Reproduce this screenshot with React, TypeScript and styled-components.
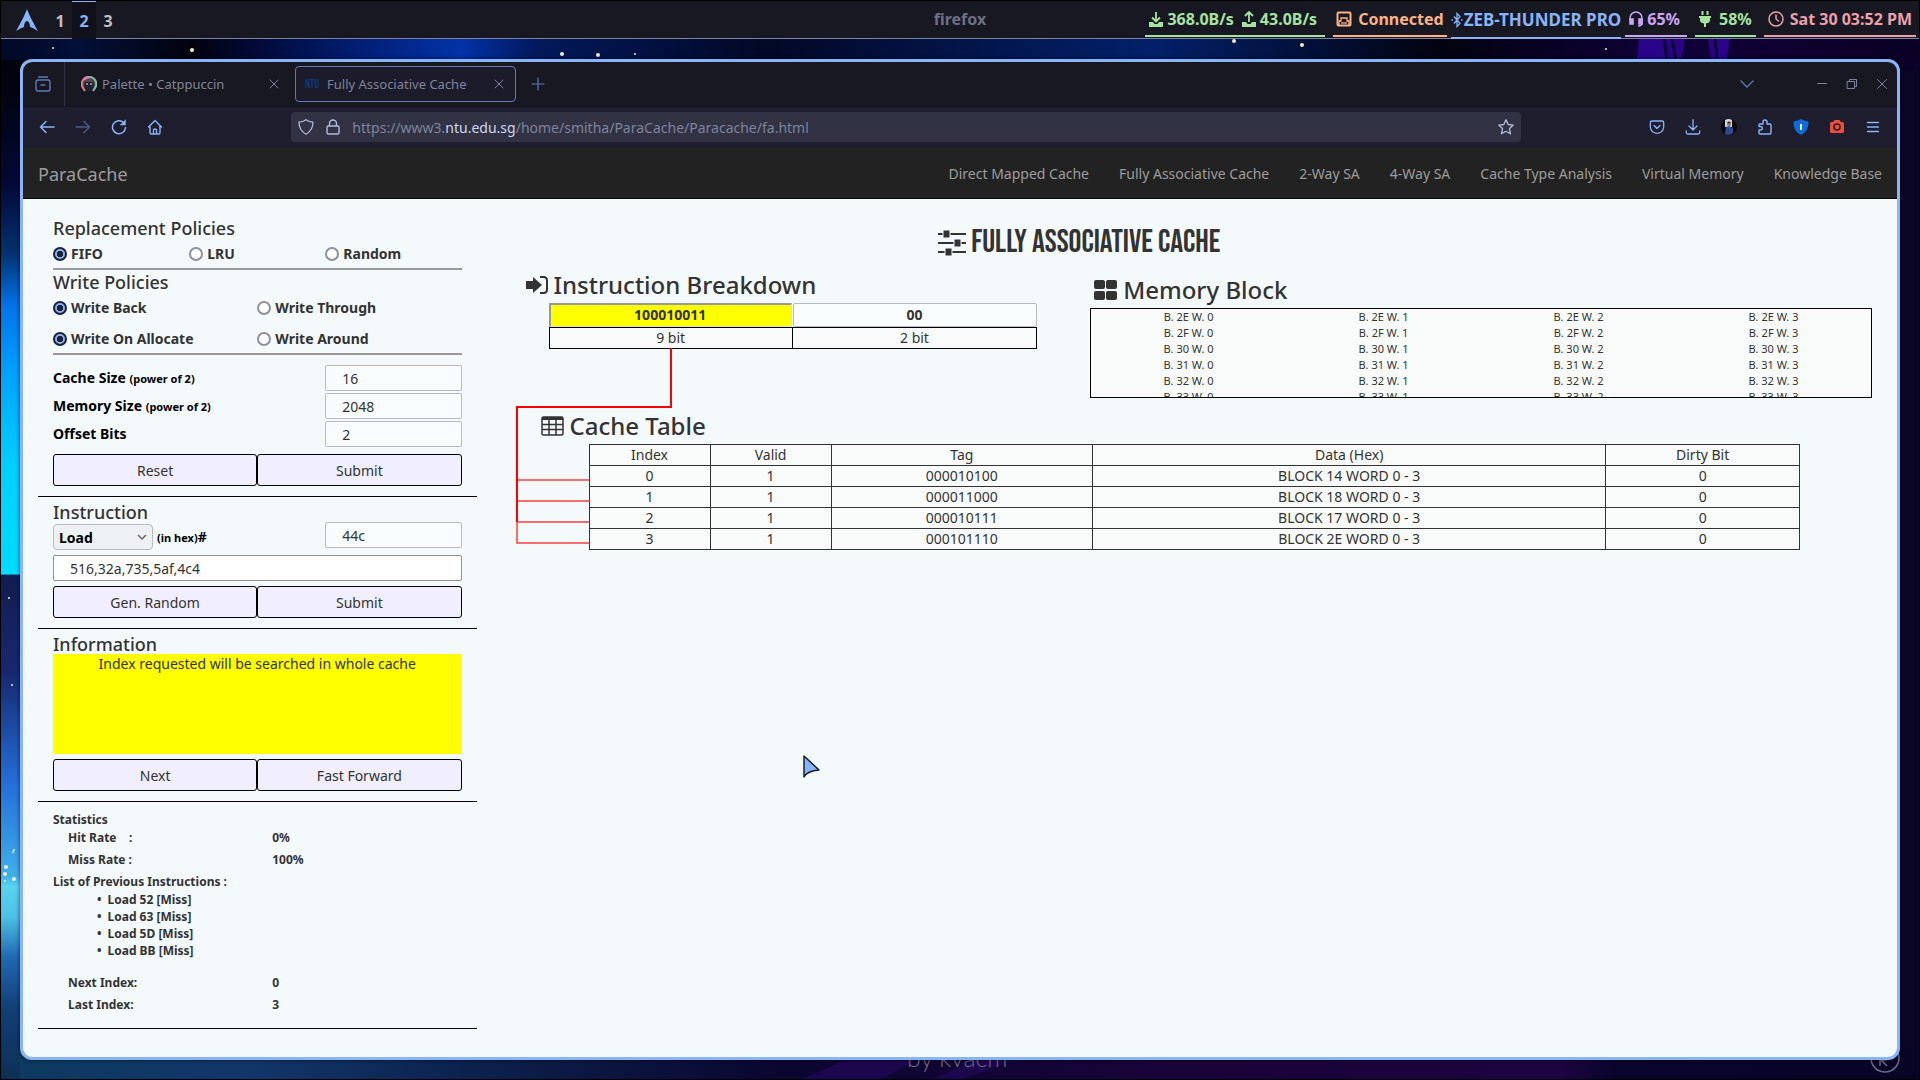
import React from "react";
import styled, { createGlobalStyle, css } from "styled-components";

const accent = "#89b4fa";
const ink = "#333";

const GlobalStyle = createGlobalStyle`
  *, *::before, *::after { box-sizing: border-box; }
  body { margin: 0; background: #000; overflow: hidden; }
  body, button, input, select { font-family: "Noto Sans", "Open Sans", sans-serif; }
  button { margin: 0; padding: 0; border: 0; background: none; color: inherit; cursor: default; }
  a { color: inherit; text-decoration: none; }
  svg { display: block; flex: none; }
`;

/* ---------- desktop ---------- */

const Desktop = styled.div`
  position: relative;
  display: flex;
  flex-direction: column;
  height: 100vh;
  padding: 1px;
  background: #000;
`;

const WallpaperSvg = styled.svg`
  position: absolute;
  inset: 0;
  width: 100%;
  height: 100%;
`;

const StatusBar = styled.header`
  position: relative;
  display: grid;
  grid-template-columns: 1fr auto 1fr;
  height: 38px;
  background: #181822;
  border-bottom: 1px solid #7f849c;
  font-size: 16px;
  font-weight: 700;
  line-height: 36px;
`;

const BarLeft = styled.div`
  display: flex;
  padding-left: 14px;
`;

const Logo = styled.span`
  display: flex;
  align-items: center;
  width: 33px;
`;

const Workspace = styled.button<{ $active?: boolean }>`
  width: 24px;
  font-size: 16px;
  font-weight: 700;
  color: ${(p) => (p.$active ? accent : "#bfbfc6")};
  background: ${(p) => (p.$active ? "#11111b" : "transparent")};
  border-top: 1px solid ${(p) => (p.$active ? accent : "transparent")};
`;

const BarTitle = styled.span`
  color: #6c7086;
`;

const BarRight = styled.div`
  display: flex;
  justify-content: flex-end;
  align-items: flex-start;
  padding-right: 3px;
`;

const Module = styled.span<{ $color: string; $pad?: number; $end?: number; $gap?: number; $before?: number; $low?: boolean }>`
  display: flex;
  align-items: center;
  gap: ${(p) => p.$gap ?? 4}px;
  height: ${(p) => (p.$low ? 38 : 36)}px;
  margin-left: ${(p) => p.$before ?? 8}px;
  padding: 2px ${(p) => p.$end ?? p.$pad ?? 4}px 0 ${(p) => p.$pad ?? 4}px;
  color: ${(p) => p.$color};
  border-bottom: 2px solid ${(p) => p.$color};
  font-size: ${(p) => (p.$low ? 17 : 16)}px;
  line-height: 32px;
  white-space: nowrap;
`;

const Rate = styled.span`
  display: flex;
  align-items: center;
  gap: 4px;
`;

/* ---------- browser window ---------- */

const Window = styled.main`
  position: relative;
  flex: 1;
  min-height: 0;
  display: flex;
  flex-direction: column;
  margin: 20px 19px 19px;
  border: 3px solid ${accent};
  border-radius: 12px;
  overflow: hidden;
  background: #f4f9fc;
  box-shadow: 0 0 4px rgba(0, 0, 0, 0.6);
`;

const TabStrip = styled.div`
  display: flex;
  flex: none;
  align-items: stretch;
  height: 45px;
  background: #181822;
  color: #7f849c;
  border-bottom: 1px solid #14141d;
`;

const ViewButton = styled.button`
  display: flex;
  align-items: center;
  justify-content: center;
  width: 42px;
  padding-right: 2px;
  color: #5f79b5;
  border-right: 1px solid #313244;
`;

const Tab = styled.div<{ $active?: boolean }>`
  display: flex;
  align-items: center;
  width: 221px;
  margin: 4px 0 4px ${(p) => (p.$active ? 0 : 9)}px;
  padding: 0 ${(p) => (p.$active ? 8 : 12)}px 0 ${(p) => (p.$active ? 9 : 6)}px;
  border: 1px solid ${(p) => (p.$active ? "#5f79b5" : "transparent")};
  border-radius: 4px;
  background: ${(p) => (p.$active ? "#1c1b29" : "transparent")};
`;

const TabName = styled.span`
  flex: 1;
  padding-left: 5px;
  font-size: 13px;
  white-space: nowrap;
`;

const NtuMark = styled.span`
  width: 17px;
  font-family: "Bebas Neue", "Liberation Sans", sans-serif;
  font-size: 12px;
  color: #0d3a80;
`;

const SmallIconButton = styled.button`
  display: flex;
  align-items: center;
  justify-content: center;
  width: 16px;
`;

const NewTab = styled.button`
  display: flex;
  align-items: center;
  padding: 0 14px;
  color: #5f79b5;
`;

const WindowControls = styled.div`
  display: flex;
  flex: 1;
  justify-content: flex-end;
`;

const ControlButton = styled.button<{ $after?: number; $tint?: string }>`
  display: flex;
  align-items: center;
  justify-content: center;
  width: 30px;
  margin-right: ${(p) => p.$after ?? 0}px;
  color: ${(p) => p.$tint ?? "#7f849c"};
`;

const Toolbar = styled.div`
  display: grid;
  grid-template-columns: 5fr minmax(300px, 1230px) 7fr;
  flex: none;
  align-items: center;
  height: 40px;
  background: #1e1e2e;
  color: ${accent};
`;

const ToolGroup = styled.div<{ $end?: boolean }>`
  display: flex;
  justify-content: ${(p) => (p.$end ? "flex-end" : "flex-start")};
  padding: 0 6px;
`;

const ToolButton = styled.button<{ $dim?: boolean }>`
  display: flex;
  align-items: center;
  justify-content: center;
  width: 36px;
  height: 32px;
  opacity: ${(p) => (p.$dim ? 0.4 : 1)};
`;

const UrlBar = styled.div`
  display: flex;
  align-items: center;
  gap: 11px;
  height: 30px;
  padding: 0 7px;
  border-radius: 4px;
  background: #313244;
  color: #b4bcdc;
`;

const Url = styled.span`
  flex: 1;
  font-size: 14px;
  color: #7f849c;

  b { font-weight: 400; color: #cdd6f4; }
`;

/* ---------- page ---------- */

const NavBar = styled.nav`
  display: flex;
  flex: none;
  align-items: center;
  justify-content: space-between;
  height: 52px;
  padding: 2px 15px 0;
  background: #222;
  border-bottom: 1px solid #080808;
  color: #9d9d9d;
`;

const Brand = styled.a`
  font-size: 18px;
`;

const NavLinks = styled.div`
  display: flex;
  gap: 30px;
  font-size: 14px;
`;

const Page = styled.div`
  display: grid;
  grid-template-columns: 1fr 3fr;
  flex: 1;
  min-height: 0;
  color: ${ink};
  font-size: 14px;
  line-height: 20px;
`;

const SidePanel = styled.aside`
  padding: 14px 15px 0;
`;

const Block = styled.section`
  padding: 5px 15px 10px;
  border-bottom: 1px solid #000;
`;

const SmallHeading = styled.h4`
  margin: 0;
  font-size: 18px;
  font-weight: 500;
  line-height: 20px;
`;

const RadioRow = styled.div<{ $cols: number }>`
  display: grid;
  grid-template-columns: repeat(${(p) => p.$cols}, 1fr);
  row-gap: 11px;
  margin-bottom: 2px;
  padding: 6px 0 4px;
  border-bottom: 2px solid #999;
`;

const RadioLabel = styled.label`
  display: flex;
  align-items: center;
  gap: 4px;
  font-weight: 700;
`;

const Radio = styled.input.attrs({ type: "radio" })`
  appearance: none;
  width: 14px;
  height: 14px;
  margin: 0;
  border: 2px solid #8f8f9d;
  border-radius: 50%;
  background: #fff;

  &:checked {
    border-color: #1e2236;
    background: radial-gradient(circle, #1e2236 3px, ${accent} 3px);
  }
`;

const field = css`
  min-width: 0;
  width: 100%;
  height: 26px;
  margin: 0;
  padding: 0 16px;
  border-radius: 2px;
  color: ${ink};
  font-size: 14px;
  outline: none;
`;

const TextBox = styled.input`
  ${field}
  border: 1px solid #babac6;
  background: #fafdfd;
`;

const WideBox = styled.input`
  ${field}
  display: block;
  margin-top: 5px;
  border: 1px solid #8f8f9d;
  background: #fff;
`;

const FormGrid = styled.div`
  display: grid;
  grid-template-columns: 2fr 1fr;
  row-gap: 2px;
  align-items: center;
  margin-top: 10px;
`;

const FieldLabel = styled.label`
  color: #000;
  font-weight: 700;

  small { font-size: 11px; }
`;

const InstructionRow = styled.div`
  display: grid;
  grid-template-columns: 2fr 1fr;
  align-items: start;
`;

const OpGroup = styled.div`
  display: flex;
  align-items: center;
  gap: 4px;
  padding-top: 2px;
`;

const SelectWrap = styled.div`
  position: relative;
  color: #666;

  svg { position: absolute; right: 6px; top: 9px; pointer-events: none; }
`;

const Select = styled.select`
  appearance: none;
  display: block;
  width: 100px;
  height: 26px;
  padding: 0 5px;
  border: 1px solid #babac6;
  border-radius: 4px;
  background: #eef1f3;
  color: #000;
  font-size: 14px;
  font-weight: 700;
`;

const ButtonPair = styled.div<{ $top: number }>`
  display: grid;
  grid-template-columns: 1fr 1fr;
  margin-top: ${(p) => p.$top}px;
`;

const PageButton = styled.button`
  height: 32px;
  border: 1px solid #000;
  border-radius: 3px;
  background: #f0eeff;
  color: ${ink};
  font-size: 14px;
`;

const InfoBox = styled.p`
  height: 100px;
  margin: 0;
  background: #ff0;
  text-align: center;
`;

const Stats = styled.section`
  padding: 9px 15px 10px;
  border-bottom: 1px solid #000;
  font-size: 12px;
  font-weight: 700;
  line-height: 18px;
`;

const StatRow = styled.div`
  display: grid;
  grid-template-columns: 1fr 1fr;
  margin: 0 0 4px 15px;
  width: 100%;
  white-space: pre;
`;

const History = styled.ul`
  margin: 0 0 15px;
  padding-left: 44px;
  line-height: 17px;
  list-style: none;

  li::before { content: "•"; margin-right: 6px; }
`;

const Main = styled.div`
  position: relative;
`;

const Title = styled.h2`
  display: flex;
  align-items: center;
  justify-content: center;
  gap: 5px;
  height: 36px;
  margin: 26px 230px 7px 0;
  font-family: "Bebas Neue", "Roboto Condensed", "Liberation Sans Narrow", "Noto Sans", sans-serif;
  font-size: 32px;
  font-weight: 500;
  text-transform: uppercase;
  white-space: nowrap;
`;

const TopGrid = styled.div`
  display: grid;
  grid-template-columns: 5fr 7fr;
  height: 141px;
`;

const SectionHeading = styled.h3<{ $indent: number }>`
  display: flex;
  align-items: center;
  gap: 6px;
  margin: 0;
  padding-left: ${(p) => p.$indent}px;
  font-size: 24px;
  font-weight: 500;
  line-height: 34px;
`;

const BreakdownGrid = styled.div`
  margin: 1px 40px 0 57px;
  display: grid;
  grid-template-columns: 1fr 1fr;
`;

const BitsInput = styled.input<{ $hot?: boolean }>`
  min-width: 0;
  height: 24px;
  margin: 0 ${(p) => (p.$hot ? 1 : 0)}px 0 0;
  padding: 0 1px 2px 0;
  border: 1px solid #babac6;
  border-radius: 2px;
  background: #fafdfd;
  color: ${ink};
  font-size: 14px;
  font-weight: 700;
  text-align: center;

  ${(p) =>
    p.$hot &&
    css`
      border: solid #999;
      border-width: 2px 1px 1px 2px;
      border-right-color: #ddd;
      border-bottom-color: #ddd;
      border-radius: 0;
      background: #ff0;
    `}
`;

const BitsLabel = styled.div`
  height: 22px;
  border: 1px solid #000;
  background: #f9fbfa;
  text-align: center;

  & + & { border-left: 0; }
`;

const MemorySection = styled.section`
  padding-top: 5px;
`;

const MemoryBox = styled.div`
  height: 90px;
  margin: 1px 25px 0 13px;
  border: 1px solid #000;
  background: #f9fbfa;
  overflow: hidden;
`;

const MemoryTable = styled.table`
  width: 100%;
  table-layout: fixed;
  border-collapse: collapse;
  font-size: 11px;
  line-height: 16px;
  text-align: center;

  td { padding: 0; }
`;

const CacheTable = styled.table`
  width: calc(100% - 194px);
  margin: 1px 0 0 97px;
  table-layout: fixed;
  border-collapse: collapse;
  background: #f9fbfa;
  text-align: center;

  th, td { height: 21px; padding: 0; border: 1px solid #333; font-weight: 400; }
`;

const Wires = styled.svg`
  position: absolute;
  left: 24px;
  top: 139px;
`;

const Pointer = styled.svg`
  position: absolute;
  left: 802px;
  top: 754px;
`;

/* ---------- icons ---------- */

type IconProps = { size?: number; w?: number; children: React.ReactNode };
const Line = ({ size = 16, w = 1.3, children }: IconProps) => (
  <svg width={size} height={size} viewBox="0 0 16 16" fill="none" stroke="currentColor" strokeWidth={w} strokeLinecap="round" strokeLinejoin="round">
    {children}
  </svg>
);

const CloseIcon = () => (
  <Line w={1}><path d="M4 4l8 8M12 4l-8 8" /></Line>
);

const Wallpaper = () => (
  <WallpaperSvg viewBox="0 0 1920 1080" preserveAspectRatio="none" aria-hidden="true">
    <defs>
      <linearGradient id="left" x1="0" y1="0" x2="0" y2="1">
        <stop offset="0.03" stopColor="#02030f" />
        <stop offset="0.12" stopColor="#030835" />
        <stop offset="0.19" stopColor="#04326f" />
        <stop offset="0.24" stopColor="#0272e8" />
        <stop offset="0.31" stopColor="#00a4ff" />
        <stop offset="0.4" stopColor="#00d0ff" />
        <stop offset="0.504" stopColor="#00dcff" />
        <stop offset="0.505" stopColor="#131c4f" />
        <stop offset="0.6" stopColor="#17286e" />
        <stop offset="0.71" stopColor="#246fd8" />
        <stop offset="0.8" stopColor="#3fb0ea" />
        <stop offset="0.81" stopColor="#58d4ee" />
        <stop offset="0.84" stopColor="#4cc0e6" />
        <stop offset="0.88" stopColor="#2068b0" />
        <stop offset="0.93" stopColor="#123f75" />
        <stop offset="1" stopColor="#0b3054" />
      </linearGradient>
      <linearGradient id="top" x1="0" y1="0" x2="1" y2="0">
        <stop offset="0" stopColor="#020824" />
        <stop offset="0.04" stopColor="#03103a" />
        <stop offset="0.1" stopColor="#02020e" />
        <stop offset="0.14" stopColor="#020c40" />
        <stop offset="0.19" stopColor="#021f78" />
        <stop offset="0.24" stopColor="#0233a8" />
        <stop offset="0.28" stopColor="#02185a" />
        <stop offset="0.4" stopColor="#020826" />
        <stop offset="0.6" stopColor="#02206a" />
        <stop offset="0.69" stopColor="#020e34" />
        <stop offset="0.75" stopColor="#02030f" />
        <stop offset="0.87" stopColor="#10003a" />
        <stop offset="1" stopColor="#0b0024" />
      </linearGradient>
      <linearGradient id="bottom" x1="0" y1="0" x2="1" y2="0">
        <stop offset="0" stopColor="#0c3a60" />
        <stop offset="0.12" stopColor="#12366a" />
        <stop offset="0.25" stopColor="#0b1f4a" />
        <stop offset="0.4" stopColor="#0a0630" />
        <stop offset="0.6" stopColor="#180338" />
        <stop offset="0.81" stopColor="#1c0440" />
        <stop offset="0.84" stopColor="#09042c" />
        <stop offset="1" stopColor="#070426" />
      </linearGradient>
    </defs>
    <rect width="1920" height="1080" fill="#0a0524" />
    <rect width="1920" height="70" fill="url(#top)" />
    <rect y="60" width="40" height="1020" fill="url(#left)" />
    <rect x="20" y="1050" width="1900" height="30" fill="url(#bottom)" />
    <path d="M1639 38h46l-4 22h-44zM1708 38h22l-3 22h-16z" fill="#2a0488" />
    <path d="M1664 38l3 22M1672 38l4 22M1715 38l2 22" stroke="#0b0130" strokeWidth="3" />
    <path d="M800 1080l50-22h70l-40 22zM930 1080l50-22h40l-60 22z" fill="#1c064e" />
    <g fill="#f3ecc8">
      <circle cx="192" cy="50" r="2" /><circle cx="53" cy="48" r="1" /><circle cx="562" cy="54" r="2" />
      <circle cx="598" cy="55" r="2" /><circle cx="635" cy="54" r="1" /><circle cx="1234" cy="41" r="2" />
      <circle cx="1302" cy="45" r="2" /><circle cx="1606" cy="49" r="1" /><circle cx="9" cy="598" r="1" />
      <circle cx="12" cy="685" r="1" /><circle cx="14" cy="850" r="1" /><circle cx="13" cy="852" r="1" />
      <circle cx="6" cy="867" r="2" /><circle cx="5" cy="874" r="2" /><circle cx="14" cy="879" r="2" /><circle cx="5" cy="881" r="1" />
    </g>
    <text x="907" y="1067" fill="#6f6a86" fontFamily="Lato, sans-serif" fontSize="25" fontWeight="300">by kvacm</text>
    <circle cx="1885" cy="1058" r="14" fill="none" stroke="#6f6a86" strokeWidth="1.5" />
    <path d="M1880 1066v-12h6q4 3 0 6h-5l6 6" fill="none" stroke="#6f6a86" strokeWidth="1.5" />
    <path d="M0 0H1920V1080H0z" fill="none" stroke="#000" strokeWidth="2" />
  </WallpaperSvg>
);

const TransferIcon = ({ up }: { up?: boolean }) => (
  <svg width="14" height="16" viewBox="0 0 14 16" fill="none" stroke="currentColor" strokeWidth="1.8">
    <path d={up ? "M7 11V1.5M3 5l4-4 4 4" : "M7 1v9M3 6.500l4 4 4-4"} />
    <path d="M0 11h4l1.500 2h3L10 11h4v5H0z" fill="currentColor" stroke="none" />
  </svg>
);

/* ---------- data ---------- */

const navLinks = ["Direct Mapped Cache", "Fully Associative Cache", "2-Way SA", "4-Way SA", "Cache Type Analysis", "Virtual Memory", "Knowledge Base"];
const memoryBlocks = ["2E", "2F", "30", "31", "32", "33"];
const words = [0, 1, 2, 3];
const cacheRows = [
  ["000010100", "14"],
  ["000011000", "18"],
  ["000010111", "17"],
  ["000101110", "2E"],
];
const history = ["Load 52 [Miss]", "Load 63 [Miss]", "Load 5D [Miss]", "Load BB [Miss]"];

const Option = ({ group, label, on }: { group: string; label: string; on?: boolean }) => (
  <RadioLabel>
    <Radio name={group} defaultChecked={on} />
    {label}
  </RadioLabel>
);

const Stat = ({ label, value }: { label: string; value: string }) => (
  <StatRow>
    <span>{label}</span>
    <span>{value}</span>
  </StatRow>
);

/* ---------- parts ---------- */

const TopBar = () => (
  <StatusBar>
    <BarLeft>
      <Logo>
        <svg width="24" height="24" viewBox="0 0 24 24" fill={accent}>
          <path d="M12 1C11 4 6 15 1 23c4-2.500 6-3.500 8-4 0-4 1.500-6 3-6s3 2 3 6c2 .5 4 1.500 8 4C18 15 13 4 12 1z" />
        </svg>
      </Logo>
      <Workspace>1</Workspace>
      <Workspace $active>2</Workspace>
      <Workspace>3</Workspace>
    </BarLeft>
    <BarTitle>firefox</BarTitle>
    <BarRight>
      <Module $color="#a6e3a1" $gap={8} $end={8}>
        <Rate><TransferIcon />368.0B/s</Rate>
        <Rate><TransferIcon up />43.0B/s</Rate>
      </Module>
      <Module $color="#fab387" $gap={6} $pad={3}>
        <svg width="16" height="16" viewBox="0 0 16 16" fill="none" stroke="currentColor" strokeWidth="2">
          <rect x="1.500" y="1.500" width="13" height="13" rx="1" />
          <path d="M3 14v-4h2V7h6v3h2v4M6 13v-2M8 13v-2M10 13v-2" strokeWidth="1.300" />
        </svg>
        Connected
      </Module>
      <Module $color={accent} $before={4} $gap={1} $pad={0} $low>
        <svg width="12" height="16" viewBox="0 0 12 16" fill="none" stroke="currentColor" strokeWidth="1.300">
          <path d="M3 4.500l6 7-3 3v-13l3 3-6 7M.5 8h1.500M10 8h1.500" />
        </svg>
        ZEB-THUNDER PRO
      </Module>
      <Module $color="#cba6f7" $before={4} $end={7}>
        <svg width="14" height="16" viewBox="0 0 14 16" fill="none" stroke="currentColor" strokeWidth="1.600">
          <path d="M1 9V7a6 6 0 0112 0v5q0 3-4 3" />
          <path d="M1 8h3v5H1zM10 8h3v5h-3z" fill="currentColor" />
        </svg>
        65%
      </Module>
      <Module $color="#a6e3a1" $gap={8}>
        <svg width="12" height="16" viewBox="0 0 12 16" fill="currentColor">
          <path d="M2.500 0h2v4h-2zM7.500 0h2v4h-2zM0 5h12v2h-1v2q0 3-4 3.500V16H5v-3.500Q1 12 1 9V7H0z" />
        </svg>
        58%
      </Module>
      <Module $color="#eba0ac" $gap={6}>
        <Line w={1.5}><circle cx="8" cy="8" r="7" /><path d="M8 4v4l2.500 2" /></Line>
        Sat 30 03:52 PM
      </Module>
    </BarRight>
  </StatusBar>
);

const BrowserChrome = () => (
  <>
    <TabStrip>
      <ViewButton aria-label="Firefox View">
        <Line w={1.4}><path d="M3.500 1h9M1 6.500Q1 4 3 4h10q2 0 2 2.500V13q0 2-2 2H3q-2 0-2-2zM6 9h4" /></Line>
      </ViewButton>
      <Tab>
        <svg width="16" height="16" viewBox="0 0 16 16">
          <circle cx="8" cy="8" r="7" fill="#5b4751" />
          <path d="M8 1A7 7 0 002 12l2 3" fill="none" stroke="#d77f80" strokeWidth="2" />
          <path d="M3 4q2-3 6-3" fill="none" stroke="#ce8bb8" strokeWidth="2" />
          <path d="M9 1a7 7 0 015 11l-2 3" fill="none" stroke="#7fc2a4" strokeWidth="2" />
          <path d="M4 5l2 1h4l2-1 1 5-2 5H5l-2-5z" fill="#232231" />
          <circle cx="6" cy="8" r="1" fill="#b7a9c9" /><circle cx="10" cy="8" r="1" fill="#b7a9c9" />
        </svg>
        <TabName>Palette • Catppuccin</TabName>
        <SmallIconButton aria-label="Close tab"><CloseIcon /></SmallIconButton>
      </Tab>
      <Tab $active>
        <NtuMark>NTU</NtuMark>
        <TabName>Fully Associative Cache</TabName>
        <SmallIconButton aria-label="Close tab"><CloseIcon /></SmallIconButton>
      </Tab>
      <NewTab aria-label="New tab"><Line w={1.2}><path d="M8 2v12M2 8h12" /></Line></NewTab>
      <WindowControls>
        <ControlButton aria-label="List tabs" $after={45} $tint="#5f79b5"><Line><path d="M2 5l6 6 6-6" /></Line></ControlButton>
        <ControlButton aria-label="Minimize"><Line w={1}><path d="M3.500 7.500h9" /></Line></ControlButton>
        <ControlButton aria-label="Restore"><Line w={1}><path d="M3.500 5.500h7v7h-7zM5.500 5.500v-2h7v7h-2" /></Line></ControlButton>
        <ControlButton aria-label="Close"><Line w={1}><path d="M3.500 3.500l9 9M12.500 3.500l-9 9" /></Line></ControlButton>
      </WindowControls>
    </TabStrip>
    <Toolbar>
      <ToolGroup>
        <ToolButton aria-label="Back"><Line w={1.5}><path d="M15 8H1.500M7 2.500L1.500 8 7 13.500" /></Line></ToolButton>
        <ToolButton aria-label="Forward" $dim><Line w={1.5}><path d="M1 8h13.500M9 2.500L14.500 8 9 13.500" /></Line></ToolButton>
        <ToolButton aria-label="Reload">
          <Line w={1.5}><path d="M14.500 8.500A6.500 6.500 0 1112.500 3.500" /><path d="M14.500 1v5h-5z" fill="currentColor" strokeWidth="0.500" /></Line>
        </ToolButton>
        <ToolButton aria-label="Home">
          <Line w={1.4}><path d="M1.500 8L8 1.500 14.500 8M3 7v6.500q0 1.500 1.500 1.500h7q1.500 0 1.500-1.500V7M6.500 15v-4q0-1 1.500-1t1.500 1v4" /></Line>
        </ToolButton>
      </ToolGroup>
      <UrlBar>
        <Line><path d="M8 .7Q11 3 15 3.200 15 11 8 15.300 1 11 1 3.200 5 3 8 .7z" /></Line>
        <Line w={1.4}><path d="M4.500 7V4.500a3.500 3.500 0 017 0V7M3.500 7h9q1.500 0 1.500 1.500v5q0 1.500-1.500 1.500h-9Q2 15 2 13.500v-5Q2 7 3.500 7z" /></Line>
        <Url>https://www3.<b>ntu.edu.sg</b>/home/smitha/ParaCache/Paracache/fa.html</Url>
        <Line><path d="M8 .8l2.200 4.700 5.100.6-3.800 3.500 1 5.200L8 12.300l-4.500 2.500 1-5.200L.7 6.100l5.100-.6z" /></Line>
      </UrlBar>
      <ToolGroup $end>
        <ToolButton aria-label="Pocket">
          <Line><path d="M3 2h10q1.700 0 1.700 1.700V8Q14 14 8 14.300 2 14 1.300 8V3.700Q1.300 2 3 2zM5 6.500l3 3 3-3" /></Line>
        </ToolButton>
        <ToolButton aria-label="Downloads"><Line><path d="M8 .7v10M4 7l4 4 4-4M1.300 12v1.500q0 1.500 1.500 1.500h10.400q1.500 0 1.500-1.500V12" /></Line></ToolButton>
        <ToolButton aria-label="Account">
          <svg width="16" height="16" viewBox="0 0 16 16">
            <circle cx="8" cy="8" r="8" fill="#08080c" />
            <path d="M4 1q4-2 7 0v7H4z" fill="#c8d6dc" />
            <path d="M4 15l1-7 3-1 4 2v5q-3 3-8 1z" fill="#24509c" />
            <circle cx="8" cy="5" r="2" fill="#9c6c55" />
            <path d="M6 4Q8 1 10 4z" fill="#161418" />
            <path d="M8 9v6" stroke="#7a294e" />
          </svg>
        </ToolButton>
        <ToolButton aria-label="Extensions">
          <Line w={1.4}><path d="M2.500 5h3.500V3q0-2 2-2t2 2v2h3q1 0 1 1v8q0 1-1 1H3q-1 0-1-1v-3h1.500q2-.2 2-1.800T3.500 7.500H2V5.500z" /></Line>
        </ToolButton>
        <ToolButton aria-label="Password manager">
          <svg width="16" height="16" viewBox="0 0 16 16">
            <path d="M8 0q4 2.300 7.500 2.500Q16 12 8 16 0 12 .5 2.500 4 2.300 8 0z" fill="#0d6bdc" />
            <path d="M7 5h2v6H7z" fill="#e8f1ff" />
          </svg>
        </ToolButton>
        <ToolButton aria-label="Screenshot">
          <svg width="16" height="16" viewBox="0 0 16 16">
            <path d="M2.500 3H4l1.500-2h5L12 3h1.500Q15 3 15 4.500v8q0 1.500-1.500 1.500h-11Q1 14 1 12.500v-8Q1 3 2.500 3z" fill="#ea4f3d" />
            <circle cx="8" cy="8" r="3" fill="none" stroke="#2a1a26" strokeWidth="1.500" />
          </svg>
        </ToolButton>
        <ToolButton aria-label="Menu"><Line w={1.4}><path d="M2.500 3.500h11M2.500 8h11M2.500 12.500h11" /></Line></ToolButton>
      </ToolGroup>
    </Toolbar>
  </>
);

const Controls = () => (
  <SidePanel>
    <Block>
      <SmallHeading>Replacement Policies</SmallHeading>
      <RadioRow $cols={3}>
        <Option group="replace" label="FIFO" on />
        <Option group="replace" label="LRU" />
        <Option group="replace" label="Random" />
      </RadioRow>
      <SmallHeading>Write Policies</SmallHeading>
      <RadioRow $cols={2}>
        <Option group="hit" label="Write Back" on />
        <Option group="hit" label="Write Through" />
        <Option group="miss" label="Write On Allocate" on />
        <Option group="miss" label="Write Around" />
      </RadioRow>
      <FormGrid>
        <FieldLabel htmlFor="cache">Cache Size <small>(power of 2)</small></FieldLabel>
        <TextBox id="cache" defaultValue="16" />
        <FieldLabel htmlFor="memory">Memory Size <small>(power of 2)</small></FieldLabel>
        <TextBox id="memory" defaultValue="2048" />
        <FieldLabel htmlFor="offset">Offset Bits</FieldLabel>
        <TextBox id="offset" defaultValue="2" />
      </FormGrid>
      <ButtonPair $top={7}>
        <PageButton>Reset</PageButton>
        <PageButton>Submit</PageButton>
      </ButtonPair>
    </Block>
    <Block>
      <SmallHeading>Instruction</SmallHeading>
      <InstructionRow>
        <OpGroup>
          <SelectWrap>
            <Select aria-label="Operation" defaultValue="Load">
              <option>Load</option>
              <option>Store</option>
            </Select>
            <svg width="10" height="8" viewBox="0 0 10 8" fill="none" stroke="currentColor" strokeWidth="1.500"><path d="M1 2l4 4 4-4" /></svg>
          </SelectWrap>
          <FieldLabel htmlFor="address"><small>(in hex)</small>#</FieldLabel>
        </OpGroup>
        <TextBox id="address" defaultValue="44c" />
      </InstructionRow>
      <WideBox aria-label="Instruction list" defaultValue="516,32a,735,5af,4c4" />
      <ButtonPair $top={5}>
        <PageButton>Gen. Random</PageButton>
        <PageButton>Submit</PageButton>
      </ButtonPair>
    </Block>
    <Block>
      <SmallHeading>Information</SmallHeading>
      <InfoBox>Index requested will be searched in whole cache</InfoBox>
      <ButtonPair $top={5}>
        <PageButton>Next</PageButton>
        <PageButton>Fast Forward</PageButton>
      </ButtonPair>
    </Block>
    <Stats>
      <div>Statistics</div>
      <Stat label={"Hit Rate    :"} value="0%" />
      <Stat label="Miss Rate :" value="100%" />
      <div>List of Previous Instructions :</div>
      <History>{history.map((h) => <li key={h}>{h}</li>)}</History>
      <Stat label="Next Index:" value="0" />
      <Stat label="Last Index:" value="3" />
    </Stats>
  </SidePanel>
);

const Simulator = () => (
  <Main>
    <Title>
      <svg width="28" height="26" viewBox="0 0 28 26" fill={ink}>
        <path d="M0 3h28v2H0zM0 12h28v2H0zM0 21h28v2H0z" />
        <path d="M5 0h7v8H5zM16 9h7v8h-7zM7 18h7v8H7z" stroke="#f4f9fc" />
      </svg>
      Fully Associative Cache
    </Title>
    <TopGrid>
      <section>
        <SectionHeading $indent={34}>
          <svg width="22" height="18" viewBox="0 0 22 18" fill={ink}>
            <path d="M0 5h7V1l9 8-9 8v-4H0z" />
            <path d="M14 1h3.500Q21 1 21 4.500v9q0 3.500-3.500 3.500H14" fill="none" stroke={ink} strokeWidth="2" />
          </svg>
          Instruction Breakdown
        </SectionHeading>
        <BreakdownGrid>
          <BitsInput aria-label="Tag" $hot readOnly value="100010011" />
          <BitsInput aria-label="Offset" readOnly value="00" />
          <BitsLabel>9 bit</BitsLabel>
          <BitsLabel>2 bit</BitsLabel>
        </BreakdownGrid>
      </section>
      <MemorySection>
        <SectionHeading $indent={17}>
          <svg width="23" height="20" viewBox="0 0 23 20" fill={ink}>
            <rect width="11" height="9" rx="2" /><rect x="12" width="11" height="9" rx="2" />
            <rect y="11" width="11" height="9" rx="2" /><rect x="12" y="11" width="11" height="9" rx="2" />
          </svg>
          Memory Block
        </SectionHeading>
        <MemoryBox>
          <MemoryTable>
            <tbody>
              {memoryBlocks.map((b) => (
                <tr key={b}>{words.map((w) => <td key={w}>B. {b} W. {w}</td>)}</tr>
              ))}
            </tbody>
          </MemoryTable>
        </MemoryBox>
      </MemorySection>
    </TopGrid>
    <SectionHeading $indent={49}>
      <svg width="23" height="20" viewBox="0 0 23 20" fill="none" stroke={ink} strokeWidth="1.500">
        <rect x="1" y="1" width="21" height="18" rx="1.500" />
        <path d="M1 2.500h21" strokeWidth="3" />
        <path d="M1 8.500h21M1 13.500h21M8 3v16M15 3v16" />
      </svg>
      Cache Table
    </SectionHeading>
    <CacheTable>
      <colgroup>
        <col width="10%" /><col width="10%" /><col width="21.600%" /><col width="42.400%" /><col width="16%" />
      </colgroup>
      <thead>
        <tr><th>Index</th><th>Valid</th><th>Tag</th><th>Data (Hex)</th><th>Dirty Bit</th></tr>
      </thead>
      <tbody>
        {cacheRows.map(([tag, block], i) => (
          <tr key={tag}><td>{i}</td><td>1</td><td>{tag}</td><td>BLOCK {block} WORD 0 - 3</td><td>0</td></tr>
        ))}
      </tbody>
    </CacheTable>
    <Wires width="157" height="208" viewBox="0 0 157 208" fill="none" stroke="#f00">
      <path d="M155 10V69H1V184" strokeWidth="2" />
      <path d="M1 142h73M1 163h73M1 184h73M1 184v21h73" strokeWidth="1.500" opacity="0.750" />
    </Wires>
  </Main>
);

export default function App() {
  return (
    <Desktop>
      <GlobalStyle />
      <Wallpaper />
      <TopBar />
      <Window>
        <BrowserChrome />
        <NavBar>
          <Brand href="#">ParaCache</Brand>
          <NavLinks>{navLinks.map((l) => <a key={l} href="#">{l}</a>)}</NavLinks>
        </NavBar>
        <Page>
          <Controls />
          <Simulator />
        </Page>
      </Window>
      <Pointer width="22" height="28" viewBox="0 0 22 28" aria-hidden="true">
        <path d="M2 2v21q3-6 15-7z" fill={accent} stroke="#1a2036" strokeWidth="1.500" strokeLinejoin="round" />
      </Pointer>
    </Desktop>
  );
}
